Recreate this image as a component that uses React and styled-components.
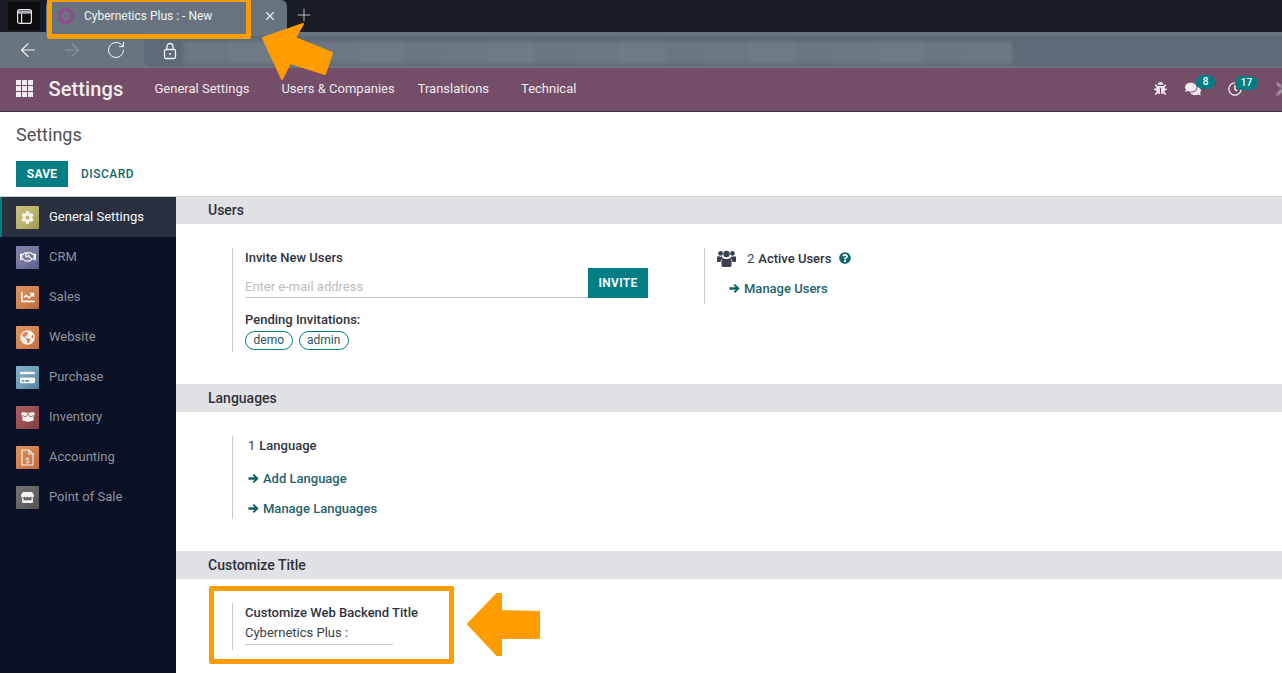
import React from "react";
import styled, { createGlobalStyle } from "styled-components";
import { FaBug, FaComments, FaCog, FaQuestionCircle, FaTools, FaChartLine, FaGlobeAmericas, FaBoxOpen, FaStore, FaRegHandshake, FaCreditCard, FaRegClock } from "react-icons/fa";
import { ArrowLeft, ArrowRight, RotateCw, X, Plus } from "lucide-react";

const GlobalStyle = createGlobalStyle`
  html, body {
    margin: 0;
    padding: 0;
    height: 673px;
    overflow: hidden;
    background: #fff;
    font-family: Roboto, "Liberation Sans", sans-serif;
  }
`;

const Page = styled.div`
  position: relative;
  width: 1282px;
  height: 673px;
  overflow: hidden;
  display: flex;
  flex-direction: column;
`;

const TabStrip = styled.div`
  height: 32px;
  background: #1a1c25;
  display: flex;
  align-items: flex-end;
  padding-left: 8px;
  flex-shrink: 0;
`;

const SideToggle = styled.div`
  width: 32px;
  height: 28px;
  margin-bottom: 2px;
  background: #0c0c0e;
  color: #e4e7ea;
  display: flex;
  align-items: center;
  justify-content: center;
`;

const Tab = styled.div`
  width: 241px;
  height: 32px;
  margin-left: 6px;
  background: #67747f;
  border-radius: 6px 6px 0 0;
  display: flex;
  align-items: center;
  color: #f1f3f5;
  font-size: 12px;
  padding-left: 12px;
  box-sizing: border-box;
`;

const Favicon = styled.div`
  width: 16px;
  height: 16px;
  box-sizing: border-box;
  border: 3px solid #95488c;
  border-radius: 50%;
  margin-right: 10px;
`;

const TabTitle = styled.span`
  flex: 1;
`;

const TabClose = styled.span`
  display: flex;
  margin-right: 10px;
  color: #f1f3f5;
`;

const NewTab = styled.span`
  display: flex;
  margin-left: 7px;
  margin-bottom: 7px;
  color: #d5d8dc;
`;

const BrowserBar = styled.div`
  height: 36px;
  background: #68757f;
  display: flex;
  padding-left: 16px;
  flex-shrink: 0;
`;

const NavGlyph = styled.span`
  display: flex;
  align-items: center;
  justify-content: center;
  width: 24px;
  height: 36px;
  margin-right: ${(props) => props.$gap}px;
  color: ${(props) => (props.$muted ? "#8b97a2" : "#f3f5f6")};
`;

const AddressBar = styled.div`
  flex: 1;
  height: 30px;
  margin-top: 4px;
  background: #5d6a77;
  border-radius: 6px 0 0 6px;
  display: flex;
  align-items: center;
  overflow: hidden;
`;

const LockBox = styled.span`
  display: flex;
  width: 39px;
  padding-left: 18px;
  box-sizing: border-box;
  color: #f3f5f6;
`;

const BlurredUrl = styled.div`
  width: 829px;
  height: 25px;
  margin-top: 1px;
  background: repeating-linear-gradient(90deg, #6c7883 0 46px, #6f7b85 46px 92px, #6a7681 92px 130px);
  border-top: 2px solid #5a6671;
  box-sizing: border-box;
  filter: blur(2px);
`;

const TopNav = styled.div`
  height: 44px;
  background: #744d68;
  border-bottom: 1px solid #3d2b39;
  display: flex;
  align-items: center;
  box-sizing: border-box;
  padding-bottom: 2px;
  color: #f0e9ee;
  flex-shrink: 0;
`;

const AppsGrid = styled.div`
  display: grid;
  grid-template-columns: repeat(3, 4.5px);
  grid-auto-rows: 4.5px;
  gap: 1.5px;
  margin-left: 16px;
  span {
    background: #f2edf0;
  }
`;

const Brand = styled.div`
  font-size: 20px;
  font-weight: 500;
  letter-spacing: 0.1px;
  margin-left: 16px;
  width: 106px;
  color: #f3eef1;
`;

const NavLink = styled.div`
  font-size: 13px;
  margin-right: ${(props) => props.$gap}px;
`;

const NavIcons = styled.div`
  margin-left: auto;
  margin-right: -8px;
  display: flex;
  align-items: center;
`;

const NavIcon = styled.span`
  position: relative;
  display: flex;
  margin-left: ${(props) => props.$left}px;
  color: ${(props) => props.$color || "#f0e9ee"};
`;

const NavBadge = styled.span`
  position: absolute;
  left: ${(props) => props.$left}px;
  top: -6px;
  height: 14px;
  width: ${(props) => props.$width}px;
  border-radius: 7px;
  background: #017e84;
  color: #fff;
  font-size: 10px;
  font-weight: 500;
  line-height: 13px;
  text-align: center;
`;

const ControlPanel = styled.div`
  height: 85px;
  border-bottom: 1px solid #cfd0d3;
  box-sizing: border-box;
  padding: 12px 16px 0;
  flex-shrink: 0;
`;

const Breadcrumb = styled.div`
  font-size: 18px;
  color: #4c4f56;
  line-height: 21px;
`;

const ButtonRow = styled.div`
  display: flex;
  align-items: center;
  margin-top: 16px;
`;

const SaveButton = styled.div`
  width: 52px;
  height: 26px;
  background: #017e84;
  color: #fff;
  font-size: 12px;
  font-weight: 700;
  letter-spacing: 0.2px;
  display: flex;
  align-items: center;
  justify-content: center;
`;

const DiscardButton = styled.div`
  margin-left: 13px;
  color: #0f6a6f;
  font-size: 12px;
  font-weight: 500;
  letter-spacing: 0.5px;
`;

const Body = styled.div`
  flex: 1;
  display: flex;
  min-height: 0;
`;

const Sidebar = styled.div`
  width: 176px;
  background: #0a1126;
  flex-shrink: 0;
`;

const SideItem = styled.div`
  height: 40px;
  display: flex;
  align-items: center;
  box-sizing: border-box;
  padding-left: 16px;
  font-size: 13px;
  color: ${(props) => (props.$active ? "#f8f9fa" : "#8e939d")};
  background: ${(props) => (props.$active ? "#2a3040" : "transparent")};
  box-shadow: ${(props) => (props.$active ? "inset 2px 0 0 #017e84" : "none")};
`;

const SideLabel = styled.span`
  margin-bottom: 2px;
`;

const AppIcon = styled.span`
  width: 23px;
  height: 23px;
  border-radius: 1px;
  background: ${(props) => props.$bg};
  color: #f6f3ee;
  display: flex;
  align-items: center;
  justify-content: center;
  margin-right: 10px;
`;

const Content = styled.div`
  flex: 1;
  min-width: 0;
`;

const SectionTitle = styled.div`
  height: ${(props) => props.$height || 28}px;
  background: #e1e2e6;
  padding-left: 32px;
  font-size: 14px;
  font-weight: 500;
  line-height: ${(props) => props.$height || 28}px;
  color: #2f333b;
`;

const Settings = styled.div`
  display: flex;
  height: ${(props) => props.$height}px;
  box-sizing: border-box;
  padding: 24px 0 0 56px;
`;

const Block = styled.div`
  border-left: 1px solid #c9c9cb;
  box-sizing: border-box;
  width: ${(props) => props.$width}px;
  height: ${(props) => props.$height}px;
  padding-left: ${(props) => props.$pad}px;
  padding-top: ${(props) => props.$padTop || 0}px;
`;

const Label = styled.div`
  font-size: 13px;
  font-weight: 500;
  line-height: 16px;
  color: #30343c;
`;

const InviteRow = styled.div`
  display: flex;
  align-items: flex-end;
  margin-top: 2px;
  margin-bottom: 14px;
`;

const EmailField = styled.div`
  width: 343px;
  height: 24px;
  border-bottom: 1px solid #c9c9cb;
  color: #bdbdbd;
  font-size: 13px;
  line-height: 28px;
`;

const InviteButton = styled.div`
  width: 60px;
  height: 30px;
  background: #017e84;
  color: #f2f8f8;
  font-size: 12px;
  font-weight: 700;
  letter-spacing: 0.3px;
  display: flex;
  align-items: center;
  justify-content: center;
`;

const Chips = styled.div`
  display: flex;
  gap: 6px;
  margin-top: 3px;
`;

const Chip = styled.div`
  height: 19px;
  padding: 0 7.5px;
  border: 1px solid #017e84;
  border-radius: 10px;
  box-sizing: border-box;
  font-size: 12px;
  line-height: 17px;
  color: #2b5560;
`;

const CountLine = styled.div`
  display: flex;
  align-items: center;
  font-size: 13px;
  font-weight: 500;
  color: #30343c;
  height: 20px;
  margin-top: ${(props) => props.$top || 0}px;
`;

const Count = styled.span`
  font-weight: 400;
  color: #3c4048;
  margin-right: 4px;
`;

const UsersGlyph = styled.svg`
  color: #3b4152;
  margin-right: 11px;
`;

const HelpGlyph = styled.span`
  display: flex;
  color: #0f6a6f;
  margin-left: 8px;
`;

const ActionLink = styled.div`
  display: flex;
  align-items: center;
  gap: 4px;
  font-size: 13px;
  font-weight: 500;
  color: #1f636b;
  height: 16px;
  margin-top: ${(props) => props.$top}px;
  margin-left: ${(props) => props.$left || 0}px;
`;

const TitleValue = styled.div`
  width: 148px;
  height: 24px;
  border-bottom: 1px solid #c9c9cb;
  box-sizing: border-box;
  font-size: 13px;
  line-height: 24px;
  color: #3c4048;
`;

const Highlight = styled.div`
  position: absolute;
  left: ${(props) => props.$left}px;
  top: ${(props) => props.$top}px;
  width: ${(props) => props.$width}px;
  height: ${(props) => props.$height}px;
  border: 5px solid #ff9c00;
  border-radius: 2px;
  box-sizing: border-box;
`;

const Pointer = styled.svg`
  position: absolute;
  left: ${(props) => props.$left}px;
  top: ${(props) => props.$top}px;
`;

const LinkArrow = () => (
  <svg width="11" height="11" viewBox="0 0 12 12" fill="#0f5f66">
    <path d="M6.500 1 L11.700 6 L6.500 11 L5 9.500 L7.400 7.300 H.5 V4.700 H7.400 L5 2.500 Z" />
  </svg>
);

const apps = [
  { name: "General Settings", bg: "linear-gradient(135deg,#c9c07a 0%,#bcb36c 55%,#9c9350 100%)", icon: <FaCog size={13} />, active: true },
  { name: "CRM", bg: "linear-gradient(135deg,#8384ab 0%,#74759d 55%,#5d5e85 100%)", icon: <FaRegHandshake size={16} /> },
  { name: "Sales", bg: "linear-gradient(135deg,#dd9160 0%,#cf7f4e 55%,#b9693c 100%)", icon: <FaChartLine size={14} /> },
  { name: "Website", bg: "linear-gradient(135deg,#e09562 0%,#d08250 55%,#bd6c3f 100%)", icon: <FaGlobeAmericas size={15} /> },
  { name: "Purchase", bg: "linear-gradient(135deg,#82b3cb 0%,#6b9cb6 55%,#527f9a 100%)", icon: <FaCreditCard size={15} /> },
  { name: "Inventory", bg: "linear-gradient(135deg,#ad5f62 0%,#964d50 55%,#7f3f43 100%)", icon: <FaBoxOpen size={14} /> },
  {
    name: "Accounting",
    bg: "linear-gradient(135deg,#e09260 0%,#cf7f4e 55%,#b9693c 100%)",
    icon: (
      <svg width="13" height="17" viewBox="0 0 13 17" fill="none" stroke="currentColor" strokeWidth="1.1">
        <path d="M1 1h7l4 4v11H1z" />
        <path d="M8 1v4h4" />
        <text x="6.5" y="13.5" fontSize="8" textAnchor="middle" fill="currentColor" stroke="none" fontFamily="Roboto, sans-serif">$</text>
      </svg>
    ),
  },
  { name: "Point of Sale", bg: "linear-gradient(135deg,#747474 0%,#636363 55%,#505050 100%)", icon: <FaStore size={13} /> },
];

export default function App() {
  return (
    <Page>
      <GlobalStyle />
      <TabStrip>
        <SideToggle>
          <svg width="15" height="15" viewBox="0 0 15 15" fill="none" stroke="currentColor" strokeWidth="1.2">
            <rect x="0.6" y="0.6" width="13.8" height="13.8" rx="2" />
            <path d="M1 3.2h13" strokeWidth="3" opacity="0.75" />
            <path d="M4.6 4.500v10" />
          </svg>
        </SideToggle>
        <Tab>
          <Favicon />
          <TabTitle>Cybernetics Plus : - New</TabTitle>
          <TabClose>
            <X size={14} strokeWidth={2} />
          </TabClose>
        </Tab>
        <NewTab>
          <Plus size={20} strokeWidth={1} />
        </NewTab>
      </TabStrip>
      <BrowserBar>
        <NavGlyph $gap={20}>
          <ArrowLeft size={22} strokeWidth={1.3} />
        </NavGlyph>
        <NavGlyph $gap={20} $muted>
          <ArrowRight size={22} strokeWidth={1.3} />
        </NavGlyph>
        <NavGlyph $gap={16}>
          <RotateCw size={20} strokeWidth={1.2} />
        </NavGlyph>
        <AddressBar>
          <LockBox>
            <svg width="16" height="18" viewBox="0 0 16 18" fill="none" stroke="currentColor" strokeWidth="1.3">
              <path d="M5 7.500V4.500a3 3 0 0 1 6 0v3" />
              <rect x="2.5" y="7.5" width="11" height="9" rx="1.5" />
              <circle cx="8" cy="12" r="1" fill="currentColor" stroke="none" />
            </svg>
          </LockBox>
          <BlurredUrl />
        </AddressBar>
      </BrowserBar>
      <TopNav>
        <AppsGrid>
          {Array.from({ length: 9 }).map((_, i) => (
            <span key={i} />
          ))}
        </AppsGrid>
        <Brand>Settings</Brand>
        <NavLink $gap={32}>General Settings</NavLink>
        <NavLink $gap={23}>Users &amp; Companies</NavLink>
        <NavLink $gap={32}>Translations</NavLink>
        <NavLink $gap={0}>Technical</NavLink>
        <NavIcons>
          <NavIcon $left={0}>
            <FaBug size={13} />
          </NavIcon>
          <NavIcon $left={18}>
            <FaComments size={16} />
            <NavBadge $left={11} $width={19}>8</NavBadge>
          </NavIcon>
          <NavIcon $left={27}>
            <FaRegClock size={14} />
            <NavBadge $left={7} $width={23}>17</NavBadge>
          </NavIcon>
          <NavIcon $left={34} $color="#a08a9a">
            <FaTools size={14} />
          </NavIcon>
        </NavIcons>
      </TopNav>
      <ControlPanel>
        <Breadcrumb>Settings</Breadcrumb>
        <ButtonRow>
          <SaveButton>SAVE</SaveButton>
          <DiscardButton>DISCARD</DiscardButton>
        </ButtonRow>
      </ControlPanel>
      <Body>
        <Sidebar>
          {apps.map((app) => (
            <SideItem key={app.name} $active={app.active}>
              <AppIcon $bg={app.bg}>{app.icon}</AppIcon>
              <SideLabel>{app.name}</SideLabel>
            </SideItem>
          ))}
        </Sidebar>
        <Content>
          <SectionTitle $height={27}>Users</SectionTitle>
          <Settings $height={160}>
            <Block $width={472} $height={104} $pad={12} $padTop={2}>
              <Label>Invite New Users</Label>
              <InviteRow>
                <EmailField>Enter e-mail address</EmailField>
                <InviteButton>INVITE</InviteButton>
              </InviteRow>
              <Label>Pending Invitations:</Label>
              <Chips>
                <Chip>demo</Chip>
                <Chip>admin</Chip>
              </Chips>
            </Block>
            <Block $width={200} $height={56} $pad={12}>
              <CountLine>
                <UsersGlyph width="19" height="17" viewBox="0 0 19 17" fill="currentColor">
                  <circle cx="3.6" cy="3.4" r="2.4" />
                  <circle cx="15.4" cy="3.4" r="2.4" />
                  <circle cx="9.5" cy="4" r="3.2" />
                  <path d="M0 7.500c0-1 1-1.500 2-1.200 1 .6 2.200.6 3 .2.2 1 .6 1.600 1 2-1.400.4-2.300 1.600-2.400 3.500H1c-.6 0-1-.4-1-1z" />
                  <path d="M19 7.500c0-1-1-1.500-2-1.200-1 .6-2.200.6-3 .2-.2 1-.6 1.600-1 2 1.400.4 2.300 1.600 2.400 3.500H18c.6 0 1-.4 1-1z" />
                  <path d="M6.500 8.200c1.600 1.200 4.400 1.200 6 0 1.600.2 2 1.800 2 3.800v3c0 1-.6 2-1.600 2H6.100c-1 0-1.600-1-1.600-2v-3c0-2 .4-3.600 2-3.800z" />
                </UsersGlyph>
                <Count>2</Count>
                Active Users
                <HelpGlyph>
                  <FaQuestionCircle size={12} />
                </HelpGlyph>
              </CountLine>
              <ActionLink $top={12} $left={12}>
                <LinkArrow />
                Manage Users
              </ActionLink>
            </Block>
          </Settings>
          <SectionTitle>Languages</SectionTitle>
          <Settings $height={139}>
            <Block $width={300} $height={83} $pad={15}>
              <CountLine $top={-1}>
                <Count>1</Count>
                Language
              </CountLine>
              <ActionLink $top={15}>
                <LinkArrow />
                Add Language
              </ActionLink>
              <ActionLink $top={14}>
                <LinkArrow />
                Manage Languages
              </ActionLink>
            </Block>
          </Settings>
          <SectionTitle>Customize Title</SectionTitle>
          <Settings $height={80}>
            <Block $width={300} $height={47} $pad={12} $padTop={2}>
              <Label>Customize Web Backend Title</Label>
              <TitleValue>Cybernetics Plus :</TitleValue>
            </Block>
          </Settings>
        </Content>
      </Body>
      <Highlight $left={47} $top={-3} $width={204} $height={42} />
      <Highlight $left={209} $top={586} $width={245} $height={78} />
      <Pointer $left={260} $top={20} width={76} height={62} viewBox="0 0 76 62">
        <path d="M3 18 L43 4 L35 18 L72 33 L65 54 L30 43 L22 59 Z" fill="#ff9c00" stroke="#ff9c00" strokeWidth="2" strokeLinejoin="round" />
      </Pointer>
      <Pointer $left={466} $top={592} width={76} height={66} viewBox="0 0 76 66">
        <path d="M2 32 L31 2 L35 2 L35 19 L73 20 L73 46 L35 46 L35 63 L31 63 Z" fill="#ff9c00" stroke="#ff9c00" strokeWidth="2" strokeLinejoin="round" />
      </Pointer>
    </Page>
  );
}
